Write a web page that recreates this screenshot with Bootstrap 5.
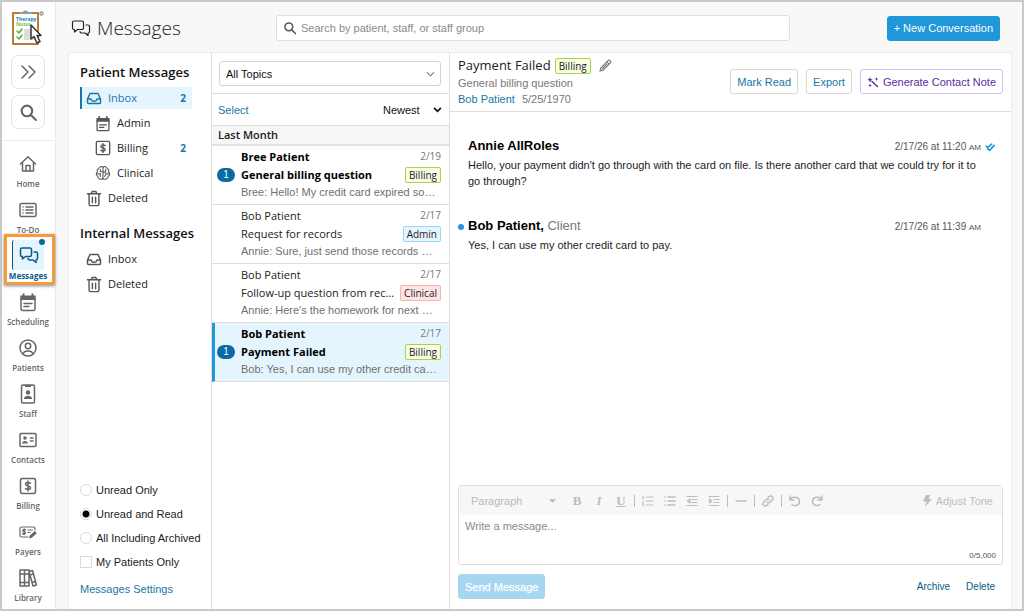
<!DOCTYPE html>
<html lang="en">
<head>
<meta charset="utf-8">
<meta name="viewport" content="width=device-width, initial-scale=1">
<title>Messages</title>
<link href="https://cdn.jsdelivr.net/npm/bootstrap@5.3.0/dist/css/bootstrap.min.css" rel="stylesheet">
<style>
:root{--ui:"Liberation Sans",Arial,sans-serif;--head:"Open Sans","Noto Sans",sans-serif;--blue:#1a76a8;--line:#dedede}
body{font-family:var(--ui);font-size:11px;line-height:16px;color:#1c1c1c;background:#f8f8f8}
a{color:var(--blue);text-decoration:none}
svg{display:block;flex:none;fill:none;stroke:currentColor;stroke-width:1.5;stroke-linecap:round;stroke-linejoin:round}
svg.thin{stroke-width:1.2}
svg.thick{stroke-width:2}
.solid{fill:currentColor;stroke:none}
.app-shell{min-height:100vh;border:2px solid #c9c9c9}
.rail{width:54px;padding-right:1px;background:#fff;border-right:1px solid #e9e9e9;font-family:var(--head)}
.rail-logo{height:53px;padding:8px 0 0 10px}
.rail-btn{width:34px;height:34px;border:1px solid #e6e6e6;border-radius:7px;background:#fff;color:#666;margin-bottom:6px;padding:0;place-items:center}
.rail-nav{border-top:1px solid #ececec;padding-top:7px;margin-top:5px}
.rail-link{height:46px;padding-top:6px;color:#666;font-size:8px;line-height:12px;font-weight:600}
.rail-link .tile{height:20px;margin-bottom:4px}
.rail-link.current{color:#0c5a86;padding-top:0;font-weight:700}
.rail-link.current .tile{width:32px;height:30px;margin-bottom:0;background:#e5f5fe;border-left:1px solid #0c4f75;border-radius:2px}
.unseen{width:6px;height:6px;border-radius:50%;background:#0a6aa1;top:-1px;right:-1px}
.callout{inset:-6px -1px 1px 2px;border:3px solid #f79b38;box-shadow:0 1px 3px #7788aa;pointer-events:none}
.page-top{height:50px;padding:2px 22px 0 15px}
.page-top h1{font:300 19px/26px var(--head);color:#222;width:205px;margin:0;gap:6px}
.search-wrap{width:514px;height:26px;background:#fff;border:1px solid #dcdcdc;border-radius:3px;padding:0 6px;color:#555}
.search-wrap input{border:0;outline:0;background:none;font-size:11px;padding:0;color:#222}
input::placeholder,textarea::placeholder{color:#8a8a8a;opacity:1}
.ui-btn{font-size:11px;line-height:16px;height:25px;padding:0 6px;border:1px solid #d8d8d8;border-radius:3px;background:#fff;color:var(--blue);white-space:nowrap}
.ui-btn.main-act{background:#2097d9;border-color:#2097d9;color:#fff}
.ui-btn.note-act{color:#5b2d9f;border-color:#cfc0f0}
.ui-btn.send-act{background:#a6d6f0;border-color:#a6d6f0;color:#fff;-webkit-text-stroke:0.25px #fff}
.panel{margin:0 10px 0 12px;background:#fff;border:1px solid #ececec;border-bottom:0;border-radius:3px 3px 0 0}
.folders{width:142px;padding:9px 0 12px 11px}
.folders h2{font:600 13px/20px var(--head);margin:0 0 5px;color:#111}
.folders .second{margin-top:11px}
.folder{font:11px/22px var(--head);height:22px;width:112px;padding:0 6px;margin-bottom:3px;color:#222;gap:6px}
.folder svg{color:#555}
.folder.sub{padding-left:15px}
.folder.open{background:#e5f5fe;border-left:2px solid #1a76a8;padding-left:4px;color:var(--blue)}
.folder.open svg{color:var(--blue)}
.folder b{font-size:10px;color:var(--blue);font-weight:700}
.opt{height:24px;gap:4px;white-space:nowrap}
.opt input{appearance:none;width:12px;height:12px;border:1px solid #dadada;margin:0;background:#fff}
.opt input[type=radio]{border-radius:50%}
.opt input[type=radio]:checked{background:radial-gradient(circle,#000 3px,#fff 4px)}
.settings{margin-top:7px}
.threads{width:239px;border-left:1px solid var(--line);border-right:1px solid var(--line)}
.topic-row{padding:8px 8px 7px 7px;border-bottom:1px solid var(--line)}
.topic-row select{display:block;width:100%;height:25px;font-size:11px;color:#111;border:1px solid #d4d4d4;border-radius:3px;padding:0 6px;background:#fff url("data:image/svg+xml,%3Csvg xmlns='http://www.w3.org/2000/svg' viewBox='0 0 10 6'%3E%3Cpath d='M1 1l4 4 4-4' fill='none' stroke='%23777' stroke-width='1.2'/%3E%3C/svg%3E") no-repeat right 5px center/9px 6px;appearance:none}
.sort-row{height:32px;padding:0 7px 0 6px;border-bottom:1px solid var(--line)}
.sort-row select{width:59px;font-size:11px;color:#111;border:0;padding:0;appearance:none;background:url("data:image/svg+xml,%3Csvg xmlns='http://www.w3.org/2000/svg' viewBox='0 0 10 7'%3E%3Cpath d='M1 1l4 4 4-4' fill='none' stroke='%23111' stroke-width='2'/%3E%3C/svg%3E") no-repeat right center/9px 6px}
.period{font:600 11px/18px var(--head);height:20px;padding-left:6px;background:#f6f6f6;border-bottom:2px solid #e3e3e3;margin:0}
.thread{height:59px;border-bottom:1px solid var(--line);padding:2px 8px 3px 5px;color:#222;font:11px/18px var(--head)}
.thread.picked{background:#e5f5fe;border-left:3px solid #2097d9;padding-left:2px}
.thread .mark-col{width:18px;margin-right:6px}
.thread .subject{gap:2px}
.count{display:block;width:18px;height:14px;border-radius:7px;background:#0a6aa1;color:#fff;font:10px/14px var(--ui);text-align:center}
.fresh{font-weight:700;color:#000}
.when{font-size:10px;line-height:16px;color:#777;font-weight:400}
.peek{font:11px/17px var(--ui);color:#707070}
.tag{font:10px/14px var(--head);border:1px solid;border-radius:2px;padding:0 3px;color:#222}
.tag-billing{background:#f8fde4;border-color:#a5d64a}
.tag-admin{background:#e5f5fe;border-color:#9ad7f7}
.tag-clinical{background:#fde3e3;border-color:#f5b5b5}
.convo-head{height:59px;border-bottom:1px solid var(--line);padding:3px 8px 0}
.convo-head h2{font:13px/19px var(--head);margin:0}
.convo-head .acts{gap:8px;margin-top:13px}
.soft{color:#777}
.feed{padding:25px 16px 0 18px}
.msg{margin-bottom:28px}
.msg h3{font:700 13px/18px var(--ui);margin:0 0 2px;color:#000}
.msg p{margin:0}
.msg time{font-size:10px;color:#555}
.msg time small{font-size:8px}
.tick{width:10px}
.dot-new{width:6px;height:6px;border-radius:50%;background:#2097d9;left:-10px;top:7px}
.compose{padding:0 8px 10px}
.editor{border:1px solid var(--line);border-radius:3px}
.tools{height:29px;background:#f7f7f7;color:#bdbdbd;padding:0 9px 0 12px}
.tools select{appearance:none;border:0;color:#b9b9b9;opacity:1;font-size:11px;padding:0;width:85px;margin-right:10px;background:url("data:image/svg+xml,%3Csvg xmlns='http://www.w3.org/2000/svg' viewBox='0 0 8 4'%3E%3Cpath d='M0 0h8L4 4z' fill='%23b9b9b9'/%3E%3C/svg%3E") no-repeat right center/7px 4px}
.tools button{width:22px;height:22px;border:0;background:none;color:#bdbdbd;padding:0;place-items:center}
.tools .glyph{font:700 13px/22px "Liberation Serif",serif}
.bar{width:1px;height:12px;background:#bdbdbd;margin:0 2px}
.editor textarea{display:block;width:100%;height:34px;border:0;outline:0;resize:none;padding:3px 6px;font-size:11px;line-height:16px}
.tally{font-size:8px;line-height:14px;height:15px;padding-right:6px;color:#555}
.send-row{margin-top:9px}
.foot-link{font-size:10px;color:#0c5a86;margin-left:16px}
</style>
</head>
<body>
<svg width="0" height="0" class="position-absolute" aria-hidden="true">
<symbol id="chat" viewBox="0 0 20 18"><path d="M8 10.500H6.500L3.500 13v-2.500H3A1.500 1.500 0 0 1 1.500 9V3.500A1.500 1.500 0 0 1 3 2h8a1.500 1.500 0 0 1 1.500 1.500V9A1.500 1.500 0 0 1 11 10.500H8zM15 6h2a1.500 1.500 0 0 1 1.500 1.500v5A1.500 1.500 0 0 1 17 14v2.500L14 14h-3.500A1.500 1.500 0 0 1 9 12.500"/></symbol>
<symbol id="find" viewBox="0 0 18 18"><circle cx="7.500" cy="7.500" r="5"/><path d="M11.500 11.500l4.500 4.500"/></symbol>
<symbol id="tray" viewBox="0 0 16 14"><path d="M1.500 8L4 2.500h8L14.500 8v3.500a1 1 0 0 1-1 1h-11a1 1 0 0 1-1-1zM1.500 8h3.500c.5 3 5.500 3 6 0h3.500"/></symbol>
<symbol id="cal" viewBox="0 0 18 20"><path d="M2 7v10a1.500 1.500 0 0 0 1.500 1.500h11A1.500 1.500 0 0 0 16 17V7"/><path class="solid" d="M1.300 3.500h2.200V1.500h2v2h7v-2h2v2h2.200V8H1.300z"/><path d="M5 11.500h8M5 14.500h5"/></symbol>
<symbol id="dollar" viewBox="0 0 18 18"><rect x="1.500" y="1.500" width="15" height="15" rx="1.500"/><path d="M11.500 6.500C10.500 5 6.500 5 6.500 7.200c0 2.300 5 1.300 5 3.600 0 2.200-4 2.200-5 .7M9 4v10"/></symbol>
<symbol id="brain" viewBox="0 0 18 18"><path d="M9 2v14M9 3C7 .7 4.500 2 4.500 4 2.500 4.500 2 6.500 2.800 7.800.8 9 1 11.500 3 12.500c0 3 4 4.500 6 2.500M9 3c2-2.300 4.500-1 4.500 1 2 .5 2.500 2.500 1.700 3.800 2 1.200 1.800 3.700-.2 4.700 0 3-4 4.500-6 2.500M6 5v2.500h3M3 10h3v3M12 5v3H9M15 10h-3l-1 3"/></symbol>
<symbol id="bin" viewBox="0 0 16 18"><path d="M1 4h14M5 4l1-2.500h4L11 4M2.800 4v11a1.500 1.500 0 0 0 1.500 1.500h7.400a1.500 1.500 0 0 0 1.500-1.500V4M6.300 7.500v6M9.700 7.500v6"/></symbol>
<symbol id="pen" viewBox="0 0 14 14"><path d="M1 13l1-3.500L10 1.500c1-1 3.500 1.500 2.500 2.500L4.500 12zM8.500 3l2.500 2.500M3.500 10.500l5-5"/></symbol>
</svg>
<div class="app-shell d-flex">
<aside class="rail flex-shrink-0 d-flex flex-column align-items-stretch">
  <a href="#" class="rail-logo d-block" aria-label="Therapy Notes">
    <svg width="34" height="38" viewBox="0 0 34 38"><rect x="1" y="3" width="25" height="31" fill="#fff" stroke="#bd7a36" stroke-width="2"/><path d="M7 4V2h4c0-2 5-2 5 0h4v2z" fill="#999" stroke="none"/><text x="4" y="11" font-size="5" font-weight="700" fill="#1a83bd" stroke="none" font-family="Open Sans">Therapy</text><text x="4" y="16" font-size="5" font-weight="700" fill="#79c437" stroke="none" font-family="Open Sans">Notes</text><path d="M12 19h11v11H12z" fill="#ddd" stroke="none"/><path d="M5 21l2 2 3-4M5 27l2 2 3-4" stroke="#58b22f"/><circle cx="29.500" cy="3.500" r="1.500" stroke="#999"/><path d="M19 15v14l3-2.500 3 6.500 3-1.500-3-6h4z" fill="#fff" stroke="#333"/></svg></a>
  <button class="rail-btn align-self-center d-grid" aria-label="Expand"><svg width="17" height="16" viewBox="0 0 17 16"><path d="M2 2l6 6-6 6M9 2l6 6-6 6"/></svg></button>
  <button class="rail-btn align-self-center d-grid" aria-label="Search"><svg class="thick" width="19" height="19"><use href="#find"/></svg></button>
  <nav class="rail-nav">
    <a href="#" class="rail-link d-flex flex-column align-items-center"><span class="tile d-flex align-items-center"><svg width="18" height="18" viewBox="0 0 18 18"><path d="M1.500 9L9 1.800 16.500 9M3.500 7.500V16h11V7.500M7 16v-5.500h4V16"/></svg></span>Home</a>
    <a href="#" class="rail-link d-flex flex-column align-items-center"><span class="tile d-flex align-items-center"><svg width="18" height="16" viewBox="0 0 18 16"><rect x="1" y="1.500" width="16" height="13" rx="1.500"/><path d="M4 5h.1M4 8h.1M4 11h.1M7 5h7M7 8h7M7 11h7"/></svg></span>To-Do</a>
    <a href="#" class="rail-link current d-flex flex-column align-items-center position-relative"><span class="tile d-flex align-items-center justify-content-center position-relative"><svg width="20" height="18"><use href="#chat"/></svg><span class="unseen position-absolute"></span></span>Messages<span class="callout position-absolute"></span></a>
    <a href="#" class="rail-link d-flex flex-column align-items-center"><span class="tile d-flex align-items-center"><svg width="18" height="20"><use href="#cal"/></svg></span>Scheduling</a>
    <a href="#" class="rail-link d-flex flex-column align-items-center"><span class="tile d-flex align-items-center"><svg width="18" height="18" viewBox="0 0 18 18"><circle cx="9" cy="9" r="8"/><circle cx="9" cy="7" r="2.700"/><path d="M4 14.500c1.500-3.500 8.500-3.500 10 0"/></svg></span>Patients</a>
    <a href="#" class="rail-link d-flex flex-column align-items-center"><span class="tile d-flex align-items-center"><svg width="16" height="20" viewBox="0 0 16 20"><rect x="1.500" y="1" width="13" height="18" rx="1.500"/><path class="solid" d="M5 1h6v2H5zM3.800 15c0-4.500 8.400-4.500 8.400 0z"/><circle class="solid" cx="8" cy="8.500" r="2.200"/></svg></span>Staff</a>
    <a href="#" class="rail-link d-flex flex-column align-items-center"><span class="tile d-flex align-items-center"><svg width="18" height="16" viewBox="0 0 18 16"><rect x="1" y="1.500" width="16" height="13" rx="1"/><circle class="solid" cx="6" cy="6" r="1.800"/><path class="solid" d="M3 11.500c0-3.500 6-3.500 6 0z"/><path d="M11.500 6H14M11.500 9H14"/></svg></span>Contacts</a>
    <a href="#" class="rail-link d-flex flex-column align-items-center"><span class="tile d-flex align-items-center"><svg width="18" height="18"><use href="#dollar"/></svg></span>Billing</a>
    <a href="#" class="rail-link d-flex flex-column align-items-center"><span class="tile d-flex align-items-center"><svg class="thin" width="18" height="16" viewBox="0 0 18 16"><path d="M9 13H2.500A1.500 1.500 0 0 1 1 11.500v-7A1.500 1.500 0 0 1 2.500 3h12A1.500 1.500 0 0 1 16 4.500V6M6.500 6C5.500 5 3.500 5.500 3.800 6.800c.3 1.200 2.700.8 2.700 2S4.500 10.500 3.500 9.500M5.100 4.800v6M9 6h4.500M9 8.500h2"/><path class="solid" d="M10 14.500l.8-3 5-4.500 2 2.200-5 4.500z"/></svg></span>Payers</a>
    <a href="#" class="rail-link d-flex flex-column align-items-center"><span class="tile d-flex align-items-center"><svg width="18" height="18" viewBox="0 0 18 18"><path d="M1 1h4.500v16H1zM5.500 1H10v16H5.500zM1 5h9M1 13.500h9M10 2.500l3.500-1 4 14.500-3.500 1zM11 6l3.500-1M13 13.500l3.500-1"/></svg></span>Library</a>
  </nav>
</aside>
<main class="flex-grow-1 d-flex flex-column" style="min-width:0">
  <header class="page-top d-flex align-items-center">
    <h1 class="d-flex align-items-center flex-shrink-0"><svg class="thin" width="20" height="18"><use href="#chat"/></svg>Messages</h1>
    <div class="search-wrap d-flex align-items-center gap-1"><svg class="thick" width="14" height="14"><use href="#find"/></svg><input class="flex-grow-1" type="search" aria-label="Search conversations" placeholder="Search by patient, staff, or staff group"></div>
    <button class="ui-btn main-act ms-auto">+ New Conversation</button>
  </header>
  <div class="panel d-flex flex-grow-1">
    <section class="folders flex-shrink-0 d-flex flex-column">
      <h2>Patient Messages</h2>
      <a href="#" class="folder open d-flex align-items-center"><svg width="16" height="14"><use href="#tray"/></svg>Inbox<b class="ms-auto">2</b></a>
      <a href="#" class="folder sub d-flex align-items-center"><svg width="16" height="17"><use href="#cal"/></svg>Admin</a>
      <a href="#" class="folder sub d-flex align-items-center"><svg width="16" height="16"><use href="#dollar"/></svg>Billing<b class="ms-auto">2</b></a>
      <a href="#" class="folder sub d-flex align-items-center"><svg class="thin" width="16" height="16"><use href="#brain"/></svg>Clinical</a>
      <a href="#" class="folder d-flex align-items-center"><svg width="16" height="17"><use href="#bin"/></svg>Deleted</a>
      <h2 class="second">Internal Messages</h2>
      <a href="#" class="folder d-flex align-items-center"><svg width="16" height="14"><use href="#tray"/></svg>Inbox</a>
      <a href="#" class="folder d-flex align-items-center"><svg width="16" height="17"><use href="#bin"/></svg>Deleted</a>
      <div class="mt-auto">
        <label class="opt d-flex align-items-center"><input type="radio" name="show">Unread Only</label>
        <label class="opt d-flex align-items-center"><input type="radio" name="show" checked>Unread and Read</label>
        <label class="opt d-flex align-items-center"><input type="radio" name="show">All Including Archived</label>
        <label class="opt d-flex align-items-center"><input type="checkbox">My Patients Only</label>
        <a href="#" class="settings d-block">Messages Settings</a>
      </div>
    </section>
    <section class="threads flex-shrink-0">
      <div class="topic-row"><select aria-label="Topic"><option>All Topics</option></select></div>
      <div class="sort-row d-flex align-items-center justify-content-between"><a href="#">Select</a><select aria-label="Sort order"><option>Newest</option></select></div>
      <h2 class="period">Last Month</h2>
      <a href="#" class="thread d-flex align-items-center"><span class="mark-col flex-shrink-0"><span class="count">1</span></span><span class="flex-grow-1" style="min-width:0"><span class="d-flex justify-content-between"><span class="fresh">Bree Patient</span><span class="when">2/19</span></span><span class="subject d-flex justify-content-between align-items-center"><span class="fresh text-truncate">General billing question</span><span class="tag tag-billing">Billing</span></span><span class="peek d-block text-truncate">Bree: Hello! My credit card expired so…</span></span></a>
      <a href="#" class="thread d-flex align-items-center"><span class="mark-col flex-shrink-0"></span><span class="flex-grow-1" style="min-width:0"><span class="d-flex justify-content-between"><span>Bob Patient</span><span class="when">2/17</span></span><span class="subject d-flex justify-content-between align-items-center"><span class="text-truncate">Request for records</span><span class="tag tag-admin">Admin</span></span><span class="peek d-block text-truncate">Annie: Sure, just send those records …</span></span></a>
      <a href="#" class="thread d-flex align-items-center"><span class="mark-col flex-shrink-0"></span><span class="flex-grow-1" style="min-width:0"><span class="d-flex justify-content-between"><span>Bob Patient</span><span class="when">2/17</span></span><span class="subject d-flex justify-content-between align-items-center"><span class="text-truncate">Follow-up question from rec…</span><span class="tag tag-clinical">Clinical</span></span><span class="peek d-block text-truncate">Annie: Here's the homework for next …</span></span></a>
      <a href="#" class="thread picked d-flex align-items-center"><span class="mark-col flex-shrink-0"><span class="count">1</span></span><span class="flex-grow-1" style="min-width:0"><span class="d-flex justify-content-between"><span class="fresh">Bob Patient</span><span class="when">2/17</span></span><span class="subject d-flex justify-content-between align-items-center"><span class="fresh text-truncate">Payment Failed</span><span class="tag tag-billing">Billing</span></span><span class="peek d-block text-truncate">Bob: Yes, I can use my other credit ca…</span></span></a>
    </section>
    <section class="flex-grow-1 d-flex flex-column" style="min-width:0">
      <header class="convo-head d-flex justify-content-between">
        <div>
          <div class="d-flex align-items-center"><h2>Payment Failed</h2><span class="tag tag-billing ms-1">Billing</span><a href="#" class="ms-2 text-secondary" aria-label="Edit topic"><svg class="thin" width="13" height="13"><use href="#pen"/></svg></a></div>
          <div class="soft">General billing question</div>
          <div class="soft"><a href="#" class="me-1">Bob Patient</a> 5/25/1970</div>
        </div>
        <div class="acts d-flex align-items-start"><button class="ui-btn">Mark Read</button><button class="ui-btn">Export</button><button class="ui-btn note-act d-flex align-items-center gap-1"><svg width="12" height="12" viewBox="0 0 12 12"><path d="M5 5.500l5.500 5"/><path class="solid" d="M3 1l.8 2 2 .8-2 .8-.8 2-.8-2-2-.8 2-.8zM9.500 1l.5 1.500 1.500.5-1.500.5L9.500 5 9 3.500 7.500 3 9 2.500zM3 7.500l.5 1.500 1.500.5-1.500.5L3 11.500 2.500 10 1 9.500 2.500 9z"/></svg>Generate Contact Note</button></div>
      </header>
      <div class="feed flex-grow-1">
        <article class="msg">
          <div class="d-flex justify-content-between align-items-center"><h3>Annie AllRoles</h3><time class="d-flex align-items-center gap-1"><span>2/17/26 at 11:20 <small>AM</small></span><svg class="tick" height="10" viewBox="0 0 12 10" style="color:#2097d9"><path stroke-width="2" d="M1.500 4l2 1.500L8 1.500M3 7l2.500 2L11 3"/></svg></time></div>
          <p class="me-3">Hello, your payment didn't go through with the card on file. Is there another card that we could try for it to go through?</p>
        </article>
        <article class="msg">
          <div class="d-flex justify-content-between align-items-center position-relative"><span class="dot-new position-absolute"></span><h3>Bob Patient, <span class="soft fw-normal">Client</span></h3><time class="d-flex align-items-center gap-1"><span>2/17/26 at 11:39 <small>AM</small></span><span class="tick"></span></time></div>
          <p>Yes, I can use my other credit card to pay.</p>
        </article>
      </div>
      <div class="compose">
        <div class="editor">
          <div class="tools d-flex align-items-center">
            <select disabled aria-label="Text style"><option>Paragraph</option></select>
            <button class="glyph" aria-label="Bold">B</button><button class="glyph fst-italic" aria-label="Italic">I</button><button class="glyph text-decoration-underline" aria-label="Underline">U</button>
            <span class="bar"></span>
            <button class="d-grid" aria-label="Numbered list"><svg class="thin" width="12" height="12" viewBox="0 0 12 12"><path d="M1 1v3M1 6.500v4.500M4 2h7M4 6h7M4 10h7"/></svg></button>
            <button class="d-grid" aria-label="Bulleted list"><svg width="12" height="12" viewBox="0 0 12 12"><path d="M1 2h.2M1 6h.2M1 10h.2M4 2h7M4 6h7M4 10h7"/></svg></button>
            <button class="d-grid" aria-label="Outdent"><svg class="thin" width="12" height="12" viewBox="0 0 12 12"><path d="M1 1.500h10M6 4.500h5M6 7.500h5M1 10.500h10M4 4v4L1.500 6z"/></svg></button>
            <button class="d-grid" aria-label="Indent"><svg class="thin" width="12" height="12" viewBox="0 0 12 12"><path d="M1 1.500h10M6 4.500h5M6 7.500h5M1 10.500h10M1.500 4v4L4 6z"/></svg></button>
            <span class="bar"></span>
            <button class="d-grid" aria-label="Divider"><svg width="12" height="12" viewBox="0 0 12 12"><path d="M1 6h10"/></svg></button>
            <span class="bar"></span>
            <button class="d-grid" aria-label="Link"><svg width="12" height="12" viewBox="0 0 12 12"><path d="M5 7a2.300 2.300 0 0 0 3.300 0l2-2A2.300 2.300 0 0 0 7 1.700l-1 1M7 5a2.300 2.300 0 0 0-3.300 0l-2 2A2.300 2.300 0 0 0 5 10.300l1-1"/></svg></button>
            <span class="bar"></span>
            <button class="d-grid" aria-label="Undo"><svg width="12" height="12" viewBox="0 0 12 12"><path d="M1 1v4h4M1.500 4.500C3 1 10.500 1.300 10.500 6.500c0 4-5 5-7.500 3"/></svg></button>
            <button class="d-grid" aria-label="Redo"><svg width="12" height="12" viewBox="0 0 12 12"><path d="M11 1v4H7M10.500 4.500C9 1 1.500 1.300 1.500 6.500c0 4 5 5 7.500 3"/></svg></button>
            <button class="ms-auto w-auto d-flex align-items-center gap-1"><svg width="9" height="12" viewBox="0 0 9 12"><path class="solid" d="M3 0h4L5.500 4H9L2 12l1.500-5.500H0z"/></svg>Adjust Tone</button>
          </div>
          <textarea aria-label="Message" placeholder="Write a message..."></textarea>
          <div class="tally text-end">0/5,000</div>
        </div>
        <div class="send-row d-flex align-items-center"><button class="ui-btn send-act me-auto">Send Message</button><a href="#" class="foot-link">Archive</a><a href="#" class="foot-link me-2">Delete</a></div>
      </div>
    </section>
  </div>
</main>
</div>
<script src="https://cdn.jsdelivr.net/npm/bootstrap@5.3.0/dist/js/bootstrap.bundle.min.js"></script>
</body>
</html>
